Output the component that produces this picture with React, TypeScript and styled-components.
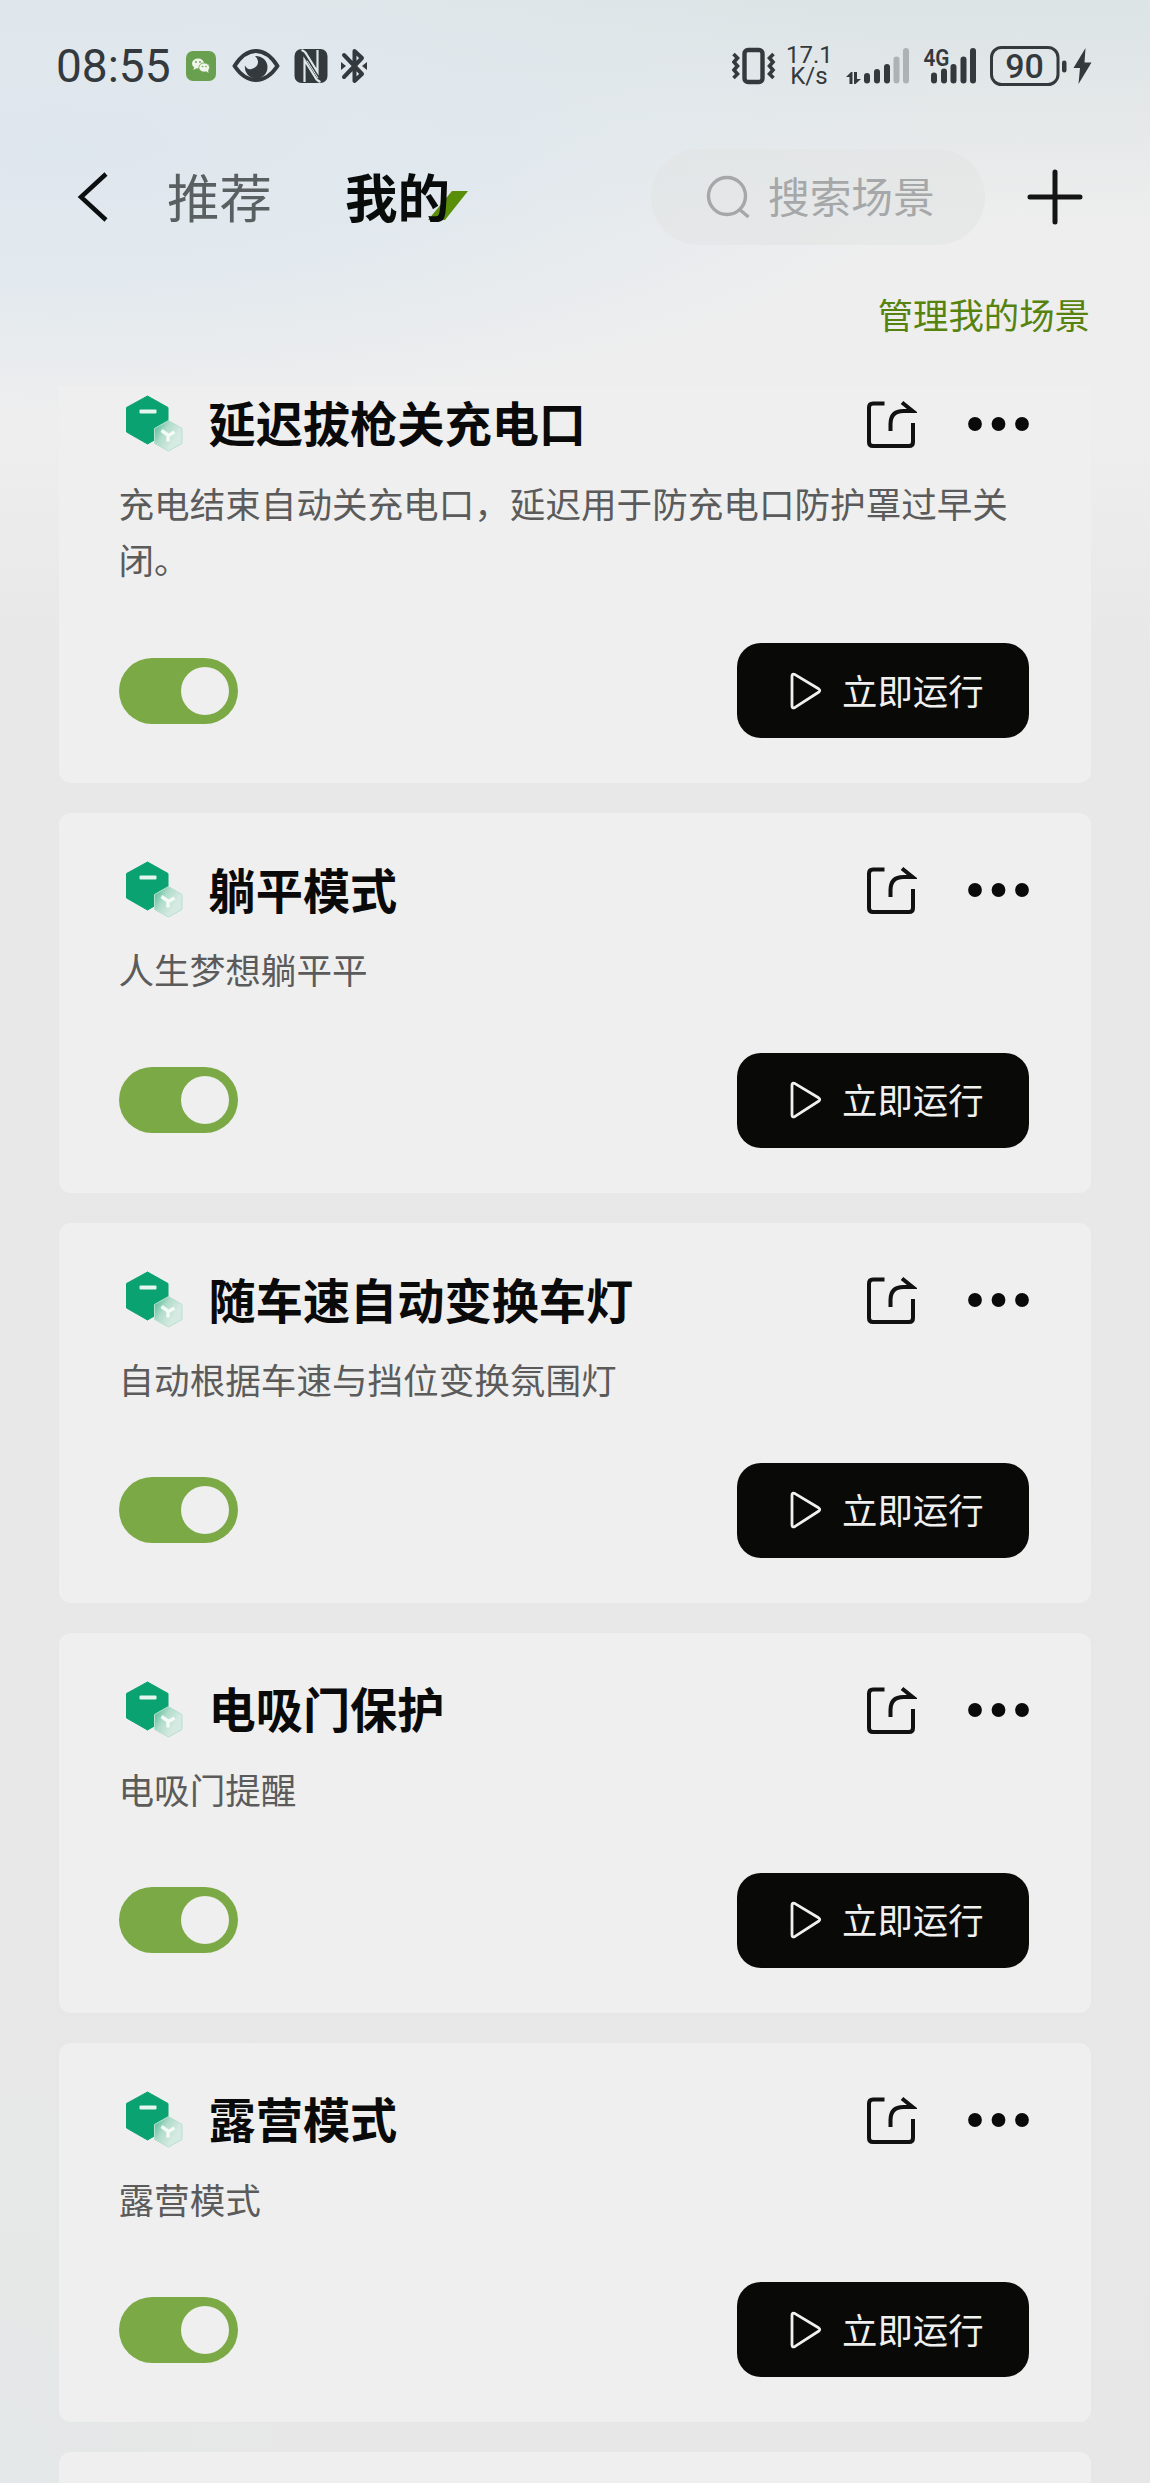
import React from "react";
import styled, { createGlobalStyle } from "styled-components";

const Global = createGlobalStyle`
  * { box-sizing: border-box; }
  body {
    margin: 0;
    font-family: "Noto Sans CJK SC", "Noto Sans", sans-serif;
    color: #0a0a0a;
  }
`;

const Screen = styled.div`
  width: 1150px;
  height: 2483px;
  overflow: hidden;
  display: flex;
  flex-direction: column;
  background:
    radial-gradient(ellipse 300px 420px at 0 2483px, rgba(228, 232, 232, 0.9), rgba(232, 232, 232, 0)),
    radial-gradient(ellipse 900px 270px at 60px 150px, #dfe7ee 0%, rgba(224, 232, 238, 0.8) 50%, rgba(232, 238, 238, 0) 100%),
    linear-gradient(180deg, #dce4e6 0, #e4e8e9 110px, #eeeeee 230px, #eeeeee 430px, #e8e8e8 640px, #e7e7e7 100%);
`;

const StatusBar = styled.header`
  height: 132px;
  padding: 0 57px 0 56px;
  display: flex;
  justify-content: space-between;
  align-items: center;
  color: #33393c;
`;

const StatusGroup = styled.div`
  display: flex;
  align-items: center;
`;

const Clock = styled.span`
  width: 117px;
  margin-right: 13px;
  font-family: Roboto, sans-serif;
  font-size: 46px;
  line-height: 60px;
  white-space: nowrap;
`;

const Speed = styled.div`
  width: 46px;
  margin: 0 14px 0 10px;
  font-family: Roboto, sans-serif;
  font-size: 24px;
  line-height: 21px;
  text-align: center;
  white-space: nowrap;
`;

const CellularIcon = styled.svg`
  margin-left: 12px;
  overflow: visible;
`;

const EyeIcon = styled.svg`
  margin-left: 16px;
`;

const NfcIcon = styled.svg`
  margin-left: 14px;
`;

const BluetoothIcon = styled.svg`
  margin-left: 13px;
`;

const BatteryIcon = styled.svg`
  margin-left: 12px;
`;

const BoltIcon = styled.svg`
  margin-left: 5px;
`;

const Nav = styled.nav`
  height: 130px;
  padding: 0 67px 0 77px;
  display: flex;
  align-items: center;
`;

const Tab = styled.span<{ $active?: boolean }>`
  margin: 0 0 5px ${(p) => (p.$active ? 73 : 58)}px;
  font-size: 52.5px;
  line-height: 72px;
  font-weight: ${(p) => (p.$active ? 700 : 400)};
  color: ${(p) => (p.$active ? "#0a0c0c" : "#5a5f61")};
  position: relative;
  isolation: isolate;
  white-space: nowrap;
`;

const Slash = styled.svg`
  position: absolute;
  left: 83px;
  top: 32px;
  z-index: -1;
`;

const Search = styled.div`
  width: 334px;
  height: 96px;
  margin-left: auto;
  padding-left: 55px;
  display: flex;
  align-items: center;
  gap: 18px;
  border-radius: 48px;
  background: rgba(225, 227, 228, 0.55);
  color: #a5a7a8;
  font-size: 41.7px;
  line-height: 60px;
`;

const SearchLabel = styled.span`
  margin-bottom: 4px;
`;

const AddIcon = styled.svg`
  margin-left: 42px;
`;

const Manage = styled.div`
  height: 124px;
  padding: 25px 60px 0 0;
  text-align: right;
  font-size: 35.4px;
  line-height: 54px;
  color: #56830f;
`;

const ListViewport = styled.main`
  flex: 1;
  min-height: 0;
  overflow: hidden;
`;

const List = styled.div`
  margin-top: -39.3px;
  padding: 0 59.5px 0 59px;
  display: flex;
  flex-direction: column;
  gap: 30.1px;
`;

const Card = styled.section`
  min-height: 379.7px;
  padding: 44px 62px 45px 59.5px;
  border-radius: 12px;
  background: #efefef;
  display: flex;
  flex-direction: column;
`;

const TitleRow = styled.div`
  height: 66px;
  display: flex;
  align-items: center;
`;

const Title = styled.h2`
  margin: 0 auto 3px 26px;
  font-size: 47.2px;
  line-height: 66px;
  font-weight: 700;
`;

const Dots = styled.svg`
  margin-left: 50px;
`;

const Desc = styled.p`
  margin: 18px 0 55px;
  font-size: 35.6px;
  line-height: 56.7px;
  color: #5b5b5b;
`;

const ActionRow = styled.div`
  height: 95px;
  margin-top: auto;
  display: flex;
  justify-content: space-between;
  align-items: center;
`;

const Switch = styled.div`
  width: 119px;
  height: 66px;
  padding-right: 9px;
  border-radius: 33px;
  background: #7ba945;
  display: flex;
  align-items: center;
  justify-content: flex-end;
`;

const Knob = styled.div`
  width: 48px;
  height: 48px;
  border-radius: 50%;
  background: #efefef;
`;

const RunButton = styled.div`
  width: 291.5px;
  height: 95px;
  padding-left: 53px;
  border-radius: 24px;
  background: #090a07;
  color: #f0f0f0;
  display: flex;
  align-items: center;
  gap: 20px;
  font-size: 35.4px;
  line-height: 54px;
`;

const RunLabel = styled.span`
  margin-bottom: 2px;
`;

function SceneIcon({ id }: { id: string }) {
  return (
    <svg width="64" height="60" viewBox="0 0 64 60">
      <defs>
        <linearGradient id={`glass${id}`} x1="0" y1="0.1" x2="0.75" y2="0.6">
          <stop offset="0" stopColor="#4cba90" />
          <stop offset="0.5" stopColor="#b0dccb" />
          <stop offset="1" stopColor="#d5eae2" />
        </linearGradient>
      </defs>
      <path d="M28.5 2 L49 13.5 V38 L28.5 50 L7.500 38 V13.500 Z" fill="#0aa271" stroke="#0aa271" strokeWidth="1" strokeLinejoin="round" />
      <rect x="20.500" y="15.500" width="17" height="4" rx="1" fill="#e4f6ee" />
      <path d="M49.500 26.500 L63 34.500 V49.500 L49.500 57 L35.500 49.500 V34.500 Z" fill={`url(#glass${id})`} stroke="#b9dfd1" strokeWidth="1" strokeLinejoin="round" />
      <path d="M42.500 36.500 L49.500 41.500 L55.500 38 M49 41 V47.500" stroke="#f3faf7" strokeWidth="3.400" fill="none" />
    </svg>
  );
}

function ShareIcon() {
  return (
    <svg width="52" height="50" viewBox="0 0 52 50" fill="none" stroke="#111" strokeWidth="4">
      <path d="M19.500 4.500 H8 Q4 4.500 4 8.500 V43 Q4 47 8 47 H44 Q48 47 48 43 V24" />
      <path d="M25.500 32 V25 Q25.500 12 38.500 12 H47.500 L37 3.500" />
    </svg>
  );
}

type Scene = { title: string; desc?: string };

const scenes: Scene[] = [
  { title: "延迟拔枪关充电口", desc: "充电结束自动关充电口，延迟用于防充电口防护罩过早关闭。" },
  { title: "躺平模式", desc: "人生梦想躺平平" },
  { title: "随车速自动变换车灯", desc: "自动根据车速与挡位变换氛围灯" },
  { title: "电吸门保护", desc: "电吸门提醒" },
  { title: "露营模式", desc: "露营模式" },
];

function SceneCard({ scene, id }: { scene: Scene; id: string }) {
  return (
    <Card>
      <TitleRow>
        <SceneIcon id={id} />
        <Title>{scene.title}</Title>
        <ShareIcon />
        <Dots width="62" height="16" viewBox="0 0 62 16" fill="#0a0a0a">
          <circle cx="8" cy="8" r="6.900" />
          <circle cx="31.500" cy="8" r="6.900" />
          <circle cx="55" cy="8" r="6.900" />
        </Dots>
      </TitleRow>
      <Desc>{scene.desc}</Desc>
      <ActionRow>
        <Switch>
          <Knob />
        </Switch>
        <RunButton>
          <svg width="32" height="38" viewBox="0 0 32 38" fill="none" stroke="#f0f0f0" strokeWidth="2.800" strokeLinejoin="round">
            <path d="M2 4.200 Q2 1 5 2.600 L28.500 16.800 Q31 18.500 28.500 20.300 L5 35.400 Q2 37 2 33.800 Z" />
          </svg>
          <RunLabel>立即运行</RunLabel>
        </RunButton>
      </ActionRow>
    </Card>
  );
}

function StatusLeft() {
  return (
    <StatusGroup>
      <Clock>08:55</Clock>
      <svg width="30" height="30" viewBox="0 0 30 30">
        <rect width="30" height="30" rx="7" fill="#68a050" />
        <ellipse cx="12" cy="12.500" rx="6" ry="5" fill="#f0f6ec" />
        <path d="M8 16 L7.500 19 L11 17 Z" fill="#f0f6ec" />
        <ellipse cx="18.200" cy="16.500" rx="5.400" ry="4.600" fill="#f0f6ec" stroke="#68a050" strokeWidth="0.800" />
        <path d="M20 20 L22.500 22 L22 18.500 Z" fill="#f0f6ec" />
        <g fill="#68a050">
          <circle cx="10" cy="11" r="0.900" />
          <circle cx="14" cy="11" r="0.900" />
          <circle cx="16.500" cy="15.500" r="0.800" />
          <circle cx="20" cy="15.500" r="0.800" />
        </g>
      </svg>
      <EyeIcon width="48" height="34" viewBox="0 0 48 34">
        <path d="M2.500 17 Q12 2 24 2 Q36 2 45.500 17 Q36 31 24 31 Q12 31 2.500 17 Z" fill="none" stroke="#33393c" strokeWidth="4" strokeLinejoin="round" />
        <path d="M23 7 A11.300 11.300 0 1 1 13 16.500 Q15 21 19.500 20 Q26.500 18 26 12 Q25.500 9 23 7 Z" fill="#33393c" />
      </EyeIcon>
      <NfcIcon width="34" height="36" viewBox="0 0 34 36">
        <rect x="0.500" y="1" width="33" height="34" rx="7" fill="#33393c" />
        <path d="M7.500 2 Q11 3 13 7 L23.500 24 V2" fill="none" stroke="#dde6e8" strokeWidth="2.200" />
        <path d="M26.500 34 Q23 33 21 29 L10.500 12 V34" fill="none" stroke="#dde6e8" strokeWidth="2.200" />
        <path d="M13 12.500 L24 30" fill="none" stroke="#dde6e8" strokeWidth="1" />
      </NfcIcon>
      <BluetoothIcon width="26" height="38" viewBox="0 0 26 38">
        <path d="M3 8 L21 27 L13.500 34 V4 L21 11 L3 30" fill="none" stroke="#33393c" strokeWidth="4" strokeLinejoin="round" strokeLinecap="round" />
        <path d="M0 15 L5 19 L0 23 Z M26 15 L21 19 L26 23 Z" fill="#33393c" />
      </BluetoothIcon>
    </StatusGroup>
  );
}

function StatusRight() {
  return (
    <StatusGroup>
      <svg width="44" height="38" viewBox="0 0 44 38" fill="none" stroke="#33393c">
        <rect x="12.500" y="3" width="18" height="32" rx="3.500" strokeWidth="4.400" />
        <path d="M1.500 7 L5.500 11 L2 15 L5.500 19 L2 23 L5.500 27 L1.500 31 M41.500 7 L37.500 11 L41 15 L37.500 19 L41 23 L37.500 27 L41.500 31" strokeWidth="3.600" />
      </svg>
      <Speed>
        17.1
        <br />
        K/s
      </Speed>
      <svg width="66" height="38" viewBox="0 0 66 38" fill="#33393c">
        <path d="M0 30 L5 25 H6.500 V37 H3.500 V30 Z M8 25 H11 V32 H15 L9.500 37 H8 Z" />
        <rect x="18" y="26" width="6" height="10.500" rx="3" />
        <rect x="28" y="22" width="6" height="14.500" rx="3" />
        <rect x="38" y="17" width="6" height="19.500" rx="3" />
        <g fill="#adb2b4">
          <rect x="47.500" y="9.500" width="6" height="27" rx="3" />
          <rect x="57" y="1" width="6" height="35.500" rx="3" />
        </g>
      </svg>
      <CellularIcon width="54" height="38" viewBox="0 0 54 38" fill="#33393c">
        <text x="-0.500" y="18.500" fontFamily="Roboto" fontSize="23" fontWeight="600" textLength="26" lengthAdjust="spacingAndGlyphs">4G</text>
        <rect x="7" y="25.500" width="6" height="11" rx="3" />
        <rect x="17" y="21.500" width="6" height="15" rx="3" />
        <rect x="26.500" y="17" width="6" height="19.500" rx="3" />
        <rect x="36.500" y="9.500" width="6" height="27" rx="3" />
        <rect x="46" y="1" width="6" height="35.500" rx="3" />
      </CellularIcon>
      <BatteryIcon width="78" height="40" viewBox="0 0 78 40" fill="#33393c">
        <rect x="1.500" y="1.500" width="66.500" height="37" rx="10" fill="none" stroke="#33393c" strokeWidth="3" />
        <text x="34.500" y="32" textAnchor="middle" fontFamily="Roboto" fontSize="34" fontWeight="500">90</text>
        <rect x="72" y="14.500" width="4.500" height="12" rx="2.200" />
      </BatteryIcon>
      <BoltIcon width="20" height="38" viewBox="0 0 20 38">
        <path d="M12.500 1 L0.500 21 H7 L5.500 37 L18.500 15.500 H11.500 Z" fill="#33393c" />
      </BoltIcon>
    </StatusGroup>
  );
}

export default function App() {
  return (
    <>
      <Global />
      <Screen>
        <StatusBar>
          <StatusLeft />
          <StatusRight />
        </StatusBar>
        <Nav>
          <svg width="32" height="50" viewBox="0 0 32 50" fill="none" stroke="#0c0f10" strokeWidth="4.500">
            <path d="M29 2 L4 25 L29 48" />
          </svg>
          <Tab>推荐</Tab>
          <Tab $active>
            我的
            <Slash width="40" height="30" viewBox="0 0 40 30">
              <path d="M24 0 H40 L17 29 H0 Z" fill="#588e08" />
            </Slash>
          </Tab>
          <Search>
            <svg width="44" height="44" viewBox="0 0 44 44" fill="none" stroke="#a5a7a8" strokeWidth="3.400">
              <circle cx="21" cy="21" r="18.500" />
              <path d="M33 34 L42.500 42" />
            </svg>
            <SearchLabel>搜索场景</SearchLabel>
          </Search>
          <AddIcon width="56" height="56" viewBox="0 0 56 56" stroke="#141414" strokeWidth="5" strokeLinecap="round">
            <path d="M28 3 V53 M3 28 H53" />
          </AddIcon>
        </Nav>
        <Manage>管理我的场景</Manage>
        <ListViewport>
          <List>
            {scenes.map((s, i) => (
              <SceneCard key={s.title} scene={s} id={String(i)} />
            ))}
            <Card />
          </List>
        </ListViewport>
      </Screen>
    </>
  );
}
